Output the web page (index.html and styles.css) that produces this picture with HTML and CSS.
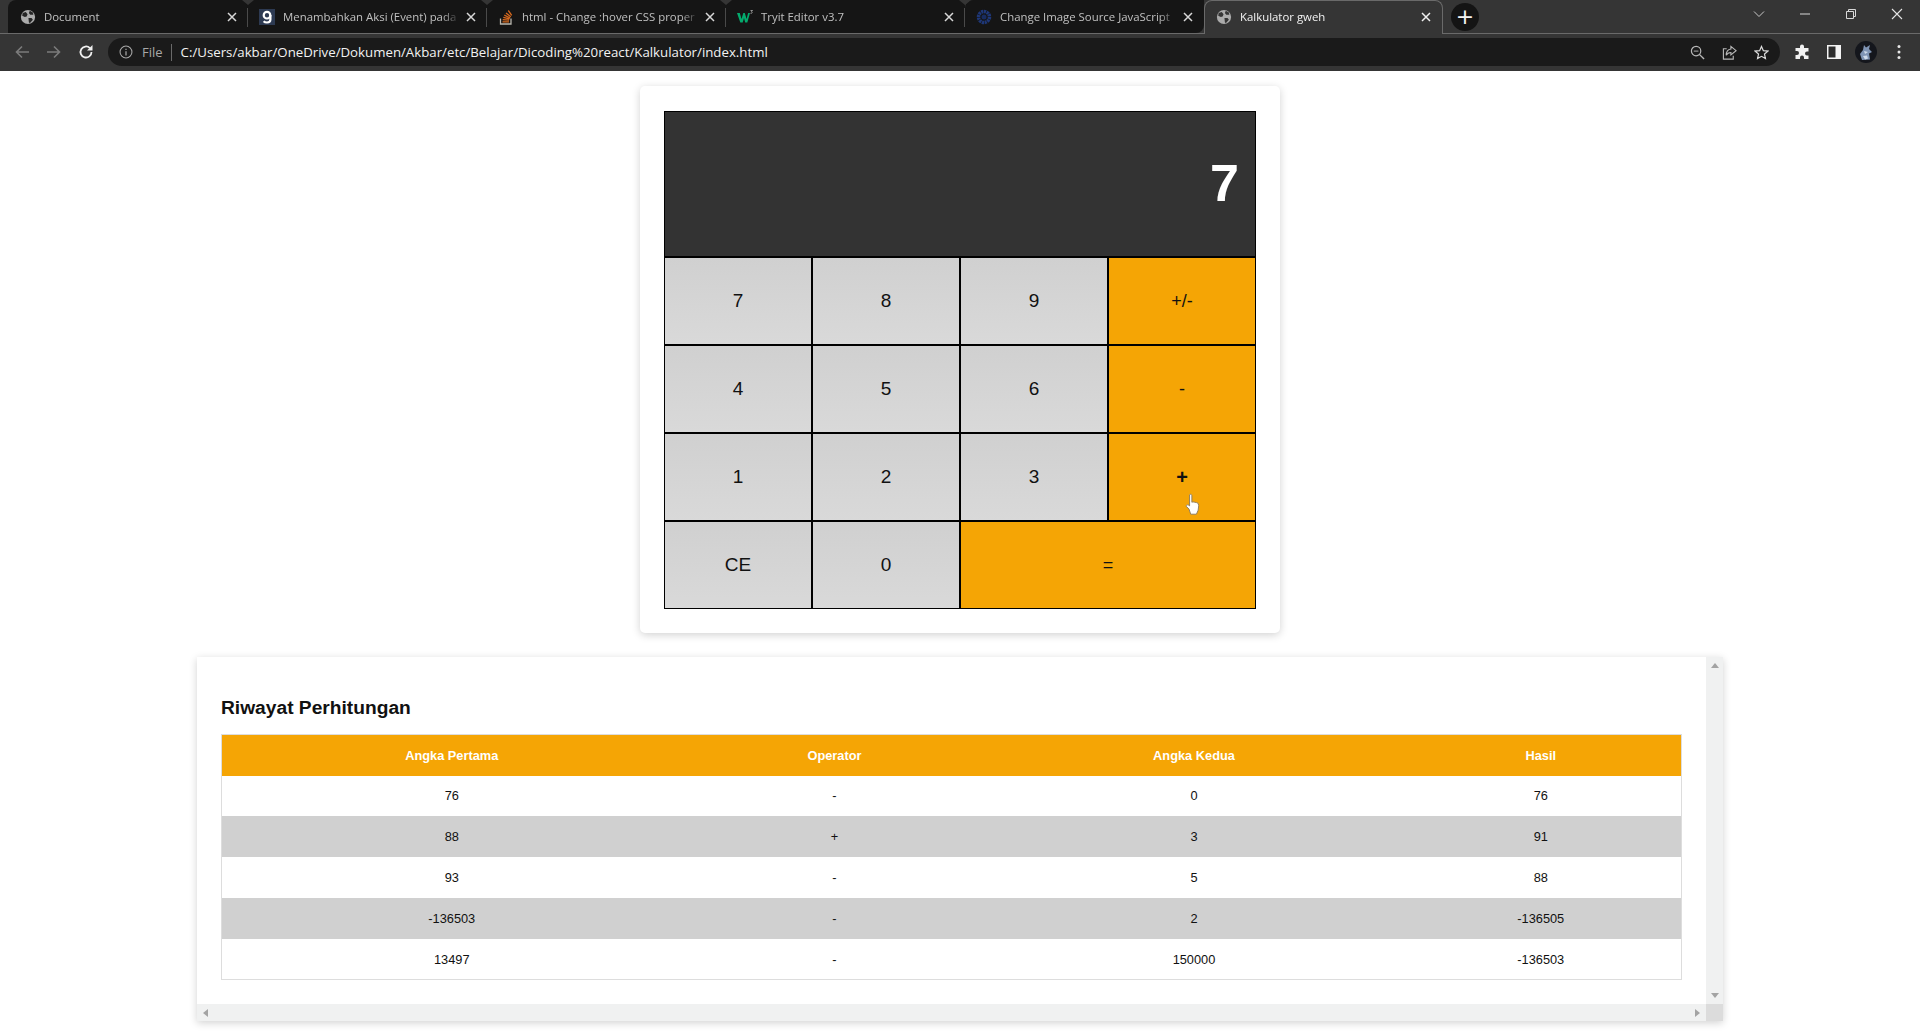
FILE: index.html
```html
<!DOCTYPE html>
<html lang="en">
<head>
  <meta charset="UTF-8">
  <title>Kalkulator gweh</title>
  <link rel="stylesheet" href="styles.css">
</head>
<body>

<header class="chrome">
  <div class="tabstrip">
    <div class="tab">
      <svg class="favicon" viewBox="-1 -1 18 18"><circle cx="8" cy="8" r="8" fill="#ababab"/><path d="M2 3.500l3.500-1 2 2.500-1 2.500-2 .5-3-1.500zM8.500 9l3.500 0 1.500 2-3.500 4-1-1zM10 1l3.500 2 .5 2.500-3.500 0-1.500-2z" fill="#262626"/></svg>
      <span class="tab-title">Document</span>
      <svg class="tab-close" viewBox="0 0 10 10"><path d="M1 1l8 8M9 1L1 9" stroke="#d8d8d8" stroke-width="1.500"/></svg>
    </div>
    <div class="tab">
      <svg class="favicon" viewBox="0 0 16 16"><rect width="16" height="16" fill="#2d3a52"/><circle cx="8" cy="6.200" r="3.300" fill="none" stroke="#fff" stroke-width="2.200"/><path d="M11.400 6v4.500c0 2-1.500 3-3.400 3-1.400 0-2.600-.4-3.400-1.200" fill="none" stroke="#fff" stroke-width="2.200"/></svg>
      <span class="tab-title">Menambahkan Aksi (Event) pada</span>
      <svg class="tab-close" viewBox="0 0 10 10"><path d="M1 1l8 8M9 1L1 9" stroke="#d8d8d8" stroke-width="1.500"/></svg>
    </div>
    <div class="tab">
      <svg class="favicon" viewBox="0 0 16 16"><path d="M2.500 9.500v5.500h10.500V9.500" fill="none" stroke="#b9b6ad" stroke-width="1.300"/><path d="M4.500 12.800h6.500M4.700 10.600l6.400.6M5.300 8.400l6.200 1.400M6.300 6.200l5.800 2.700M8 4l4.800 3.800M10.300 1.500l3.400 4.800" stroke="#d8691e" stroke-width="1.300" fill="none"/></svg>
      <span class="tab-title">html - Change :hover CSS proper</span>
      <svg class="tab-close" viewBox="0 0 10 10"><path d="M1 1l8 8M9 1L1 9" stroke="#d8d8d8" stroke-width="1.500"/></svg>
    </div>
    <div class="tab">
      <svg class="favicon" viewBox="0 0 16 16"><path d="M0 4h2.800l1.700 6 1.800-6h1.500l1.800 6 1.500-6h1.900l-2.700 9.500H8.200L7 9l-1.300 4.500H3.300z" fill="#04aa6d"/><path d="M13.500 1.500h2l-1 1.200c.8 0 .9 1.600-.2 1.600h-.8" fill="none" stroke="#c8c8c8" stroke-width=".7"/></svg>
      <span class="tab-title">Tryit Editor v3.7</span>
      <svg class="tab-close" viewBox="0 0 10 10"><path d="M1 1l8 8M9 1L1 9" stroke="#d8d8d8" stroke-width="1.500"/></svg>
    </div>
    <div class="tab">
      <svg class="favicon" viewBox="0 0 16 16"><circle cx="8" cy="8" r="5.500" fill="none" stroke="#1e3778" stroke-width="3.500" stroke-dasharray="2.200 .6"/><circle cx="8" cy="8" r="2.500" fill="#182c60"/></svg>
      <span class="tab-title">Change Image Source JavaScript</span>
      <svg class="tab-close" viewBox="0 0 10 10"><path d="M1 1l8 8M9 1L1 9" stroke="#d8d8d8" stroke-width="1.500"/></svg>
    </div>
    <div class="tab tab-active">
      <svg class="favicon" viewBox="-1 -1 18 18"><circle cx="8" cy="8" r="8" fill="#ababab"/><path d="M2 3.500l3.500-1 2 2.500-1 2.500-2 .5-3-1.500zM8.500 9l3.500 0 1.500 2-3.500 4-1-1zM10 1l3.500 2 .5 2.500-3.500 0-1.500-2z" fill="#353535"/></svg>
      <span class="tab-title">Kalkulator gweh</span>
      <svg class="tab-close" viewBox="0 0 10 10"><path d="M1 1l8 8M9 1L1 9" stroke="#f0f0f0" stroke-width="1.500"/></svg>
    </div>
    <div class="newtab">+</div>
    <div class="window-btns">
      <svg class="win-icon" viewBox="0 0 12 12"><path d="M1 3.500l5 5 5-5" fill="none" stroke="#c8c8c8"/></svg>
      <svg class="win-icon" viewBox="0 0 12 12"><path d="M1 6h10" stroke="#d8d8d8"/></svg>
      <svg class="win-icon" viewBox="0 0 12 12"><path d="M1.500 3.500h7v7h-7zM3.500 3.500v-2h7v7h-2" fill="none" stroke="#d8d8d8"/></svg>
      <svg class="win-icon" viewBox="0 0 12 12"><path d="M1 1l10 10M11 1L1 11" stroke="#e4e4e4" stroke-width="1.100"/></svg>
    </div>
  </div>
  <div class="toolbar">
    <svg class="nav-icon" viewBox="0 0 16 16"><path d="M15 8H2.500M8 2.500L2.500 8 8 13.500" fill="none" stroke="#7b7b7b" stroke-width="1.600"/></svg>
    <svg class="nav-icon" viewBox="0 0 16 16"><path d="M1 8h12.500M8 2.500L13.500 8 8 13.500" fill="none" stroke="#7b7b7b" stroke-width="1.600"/></svg>
    <svg class="nav-icon" viewBox="0 0 16 16"><path d="M13.500 8a5.500 5.500 0 1 1-1.600-3.900" fill="none" stroke="#f0f0f0" stroke-width="1.800"/><path d="M14.500 1v5.500H9z" fill="#f0f0f0"/></svg>
    <div class="omnibox">
      <svg class="info-icon" viewBox="0 0 16 16"><circle cx="8" cy="8" r="6.800" fill="none" stroke="#a8a8a8" stroke-width="1.200"/><path d="M8 7v5M8 4.200v1.500" stroke="#a8a8a8" stroke-width="1.400"/></svg>
      <span class="scheme">File</span>
      <span class="url">C:/Users/akbar/OneDrive/Dokumen/Akbar/etc/Belajar/Dicoding%20react/Kalkulator/index.html</span>
      <svg class="omni-icon" viewBox="0 0 16 16"><circle cx="6.500" cy="6.500" r="5" fill="none" stroke="#b8b8b8" stroke-width="1.300"/><path d="M10 10l5 5" stroke="#b8b8b8" stroke-width="1.500"/><path d="M4 6.500h5" stroke="#b8b8b8"/></svg>
      <svg class="omni-icon" viewBox="0 0 16 16"><path d="M5 4H1.500v11h10.500v-3.500" fill="none" stroke="#b8b8b8" stroke-width="1.200"/><path d="M9.500 1.500L15 6l-5.500 4.500V8C7 8 5.500 9 4.500 11c0-4 2-6.500 5-6.800z" fill="none" stroke="#b8b8b8" stroke-width="1.200"/></svg>
      <svg class="omni-icon" viewBox="0 0 16 16"><path d="M8 1.500l2 4.500 4.800.5-3.600 3.200 1 4.800L8 12.100l-4.200 2.400 1-4.800L1.200 6.500 6 6z" fill="none" stroke="#dcdcdc" stroke-width="1.300"/></svg>
    </div>
    <svg class="tool-icon" viewBox="0 0 16 16"><path d="M6 2.500a2 2 0 0 1 4 0V4h4.500v3.500h-1.500a2 2 0 0 0 0 4h1.500V15H10v-1.500a2 2 0 0 0-4 0V15H1.500v-4H3a2 2 0 0 0 0-4H1.500V4H6z" fill="#f2f2f2"/></svg>
    <svg class="tool-panel" viewBox="0 0 14 14"><path d="M0 0h14v14H0z" fill="#f4f4f4"/><path d="M1.500 1.500h7v11h-7z" fill="#2c2c2c"/></svg>
    <svg class="avatar" viewBox="0 0 22 22"><circle cx="11" cy="11" r="11" fill="#14161c"/><path d="M7 19l-2-6 3-4 1-5 2 2.500 4-2.500-1 4 3 3-3 1.500 1 6z" fill="#7f94b4"/><path d="M9 10l4 1-3 2zM8 15l4-.5 1 3-3 1z" fill="#cfdaea"/></svg>
    <svg class="menu-icon" viewBox="0 0 4 16"><circle cx="2" cy="2.500" r="1.500" fill="#e8e8e8"/><circle cx="2" cy="8" r="1.500" fill="#e8e8e8"/><circle cx="2" cy="13.500" r="1.500" fill="#e8e8e8"/></svg>
  </div>
</header>

<main class="page">
  <section class="calculator">
    <div class="display">7</div>
    <div class="keys">
      <div class="key">7</div>
      <div class="key">8</div>
      <div class="key">9</div>
      <div class="key key-op">+/-</div>
      <div class="key">4</div>
      <div class="key">5</div>
      <div class="key">6</div>
      <div class="key key-op">-</div>
      <div class="key">1</div>
      <div class="key">2</div>
      <div class="key">3</div>
      <div class="key key-op key-hover">+
        <svg class="cursor" viewBox="0 0 14 20"><path d="M4 1.500c.8-.8 1.800-.4 2 .6V8l1-.3 1.500.3 1.500.3 1.500.7.500 2-.5 4-1.500 3.500H5L3.500 14 1 11.500c0-1 1-1.500 2-1l1 .7z" fill="#fff" stroke="#8a7a5c" stroke-width=".8"/></svg>
      </div>
      <div class="key">CE</div>
      <div class="key">0</div>
      <div class="key key-op key-wide">=</div>
    </div>
  </section>

  <section class="history">
    <div class="history-view">
      <h2 class="history-title">Riwayat Perhitungan</h2>
      <table class="history-table">
        <colgroup>
          <col class="col-a"><col class="col-b"><col class="col-c"><col class="col-d">
        </colgroup>
        <thead>
          <tr><th>Angka Pertama</th><th>Operator</th><th>Angka Kedua</th><th>Hasil</th></tr>
        </thead>
        <tbody>
          <tr><td>76</td><td>-</td><td>0</td><td>76</td></tr>
          <tr><td>88</td><td>+</td><td>3</td><td>91</td></tr>
          <tr><td>93</td><td>-</td><td>5</td><td>88</td></tr>
          <tr><td>-136503</td><td>-</td><td>2</td><td>-136505</td></tr>
          <tr><td>13497</td><td>-</td><td>150000</td><td>-136503</td></tr>
        </tbody>
      </table>
    </div>
    <div class="bar bar-v"><span class="arrow arrow-up"></span><span class="arrow arrow-down"></span></div>
    <div class="bar bar-h"><span class="arrow arrow-left"></span><span class="arrow arrow-right"></span></div>
    <div class="bar-corner"></div>
  </section>
</main>

</body>
</html>
```

FILE: styles.css
```css
* {
  box-sizing: border-box;
}
html, body {
  margin: 0;
  height: 100%;
}
body {
  font-family: "Liberation Sans", Arial, sans-serif;
  background: #fff;
  overflow: hidden;
}

/* browser chrome */
.chrome {
  height: 71px;
  background: #353535;
  font-family: "Open Sans", "Noto Sans", sans-serif;
}
.tabstrip {
  height: 34px;
  display: flex;
  align-items: stretch;
  padding-left: 8px;
  border-bottom: 1px solid #6a6a6a;
}
.tab {
  position: relative;
  width: 239px;
  display: flex;
  align-items: center;
  padding: 0 8px 0 11px;
  background: #151515;
  color: #c0c0c0;
  font-size: 11.400px;
}
/* short divider between tabs */
.tab::after {
  content: "";
  position: absolute;
  right: 0;
  top: 8px;
  width: 1px;
  height: 19px;
  background: #4a4a4a;
}
/* small notch at the top of each divider */
.tab::before {
  content: "";
  position: absolute;
  right: -6px;
  top: 0;
  width: 12px;
  height: 5px;
  background: #353535;
  clip-path: polygon(0 0, 100% 0, 50% 100%);
  z-index: 1;
}
.tab:nth-child(1) {
  width: 240px;
  padding-left: 12px;
  border-radius: 8px 0 0 0;
}
.tab:nth-child(5) {
  border-radius: 8px 0 8px 0;
}
.tab:nth-child(5)::after,
.tab:nth-child(5)::before,
.tab-active::after,
.tab-active::before {
  display: none;
}
.tab-active {
  height: 34px;
  padding-bottom: 2px;
  background: #353535;
  border: 1px solid #6a6a6a;
  border-bottom: 0;
  border-radius: 8px 8px 0 0;
  color: #f2f2f2;
}
.favicon {
  width: 16px;
  height: 16px;
  flex: none;
  margin-right: 8px;
}
.tab-title {
  flex: 1;
  min-width: 0;
  white-space: nowrap;
  -webkit-mask-image: linear-gradient(to left, transparent 0, #000 18px);
  mask-image: linear-gradient(to left, transparent 0, #000 18px);
}
.tab-close {
  flex: none;
  width: 10px;
  height: 10px;
  margin: 0 3px 0 6px;
}
.newtab {
  width: 28px;
  height: 28px;
  margin: 3px 0 0 8px;
  border-radius: 50%;
  background: #141414;
  color: #f4f4f4;
  font: 400 22px/27px "DejaVu Sans", sans-serif;
  text-align: center;
}
.window-btns {
  margin-left: auto;
  display: flex;
  align-items: flex-start;
}
.win-icon {
  width: 12px;
  height: 12px;
  margin-top: 8px;
  margin-right: 34px;
}
.win-icon:last-child {
  margin-right: 17px;
}
.toolbar {
  height: 37px;
  display: flex;
  align-items: center;
  padding: 0 19px 1px 14px;
}
.nav-icon {
  width: 16px;
  height: 16px;
  margin-right: 16px;
  flex: none;
}
.omnibox {
  flex: 1;
  height: 28px;
  display: flex;
  align-items: center;
  margin: 0 14px 0 -2px;
  padding: 0 11px;
  border-radius: 14px;
  background: #1a1a1a;
}
.info-icon {
  width: 14px;
  height: 14px;
  margin-right: 9px;
}
.scheme {
  font-size: 13px;
  color: #a8a8a8;
  padding-right: 8px;
  border-right: 1px solid #6a6a6a;
  line-height: 17px;
  margin-right: 9px;
}
.url {
  flex: 1;
  font-size: 13.250px;
  color: #f2f2f2;
}
.omni-icon {
  width: 15px;
  height: 15px;
  margin-left: 17px;
}
.tool-icon {
  width: 16px;
  height: 16px;
  margin-right: 17px;
}
.tool-panel {
  width: 14px;
  height: 14px;
  margin-right: 14px;
}
.avatar {
  width: 22px;
  height: 22px;
  margin-right: 20px;
}
.menu-icon {
  width: 4px;
  height: 16px;
}

/* calculator */
.page {
  display: flex;
  flex-direction: column;
  align-items: center;
  padding-top: 15px;
}
.calculator {
  width: 640px;
  height: 547px;
  padding: 25px 24px 0;
  border-radius: 5px;
  background: #fff;
  box-shadow: 0 2px 8px rgba(0, 0, 0, 0.18);
}
.display {
  height: 145px;
  padding-right: 16px;
  border: 1px solid #000;
  border-bottom: 0;
  background: #333;
  color: #fff;
  font-size: 52px;
  font-weight: bold;
  line-height: 143px;
  text-align: right;
}
.keys {
  display: grid;
  grid-template-columns: 147px repeat(3, 148px);
  grid-auto-rows: 88px;
  border-right: 1px solid #000;
  border-bottom: 1px solid #000;
  width: 592px;
}
.key {
  position: relative;
  display: flex;
  align-items: center;
  justify-content: center;
  border-left: 2px solid #000;
  border-top: 2px solid #000;
  background: linear-gradient(#d0d0d0, #d9d9d9);
  font-size: 19px;
  color: #111;
}
.key:nth-child(4n+1) {
  border-left-width: 1px;
}
.key-op {
  background: #f5a505;
  font-size: 18px;
}
.key-wide {
  grid-column: span 2;
}
.key-hover {
  font-size: 20px;
  font-weight: bold;
}
.cursor {
  position: absolute;
  left: 76px;
  top: 59px;
  width: 16px;
  height: 23px;
}

/* history table */
.history {
  width: 1526px;
  height: 364px;
  margin-top: 24px;
  display: grid;
  grid-template-columns: 1fr 17px;
  grid-template-rows: 1fr 17px;
  background: #fff;
  box-shadow: 0 2px 8px rgba(0, 0, 0, 0.18);
}
.history-view {
  padding: 0 24px;
  overflow: hidden;
}
.history-title {
  margin: 39px 0 15px;
  font-size: 19.200px;
  line-height: 23px;
  color: #111;
}
.history-table {
  width: 1461px;
  border-collapse: collapse;
  table-layout: fixed;
  border: 1px solid #ddd;
  font-size: 12.800px;
  text-align: center;
  color: #111;
}
.col-a { width: 460px; }
.col-b { width: 306px; }
.col-c { width: 413px; }
.history-table th {
  height: 41px;
  background: #f5a505;
  color: #fff;
}
.history-table td {
  height: 40.900px;
}
.history-table tbody tr:nth-child(even) td {
  background: #d0d0d0;
}
.bar {
  display: flex;
  justify-content: space-between;
  align-items: center;
  background: #f0f1f1;
}
.bar-v {
  flex-direction: column;
  padding: 6px 0;
}
.bar-h {
  padding: 0 6px;
}
.bar-corner {
  background: #dcdcdc;
}
.arrow {
  width: 0;
  height: 0;
  border: 4px solid transparent;
}
.arrow-up {
  border-top: 0;
  border-bottom: 5px solid #a3a3a3;
}
.arrow-down {
  border-bottom: 0;
  border-top: 5px solid #a3a3a3;
}
.arrow-left {
  border-left: 0;
  border-right: 5px solid #a3a3a3;
}
.arrow-right {
  border-right: 0;
  border-left: 5px solid #a3a3a3;
}
```
